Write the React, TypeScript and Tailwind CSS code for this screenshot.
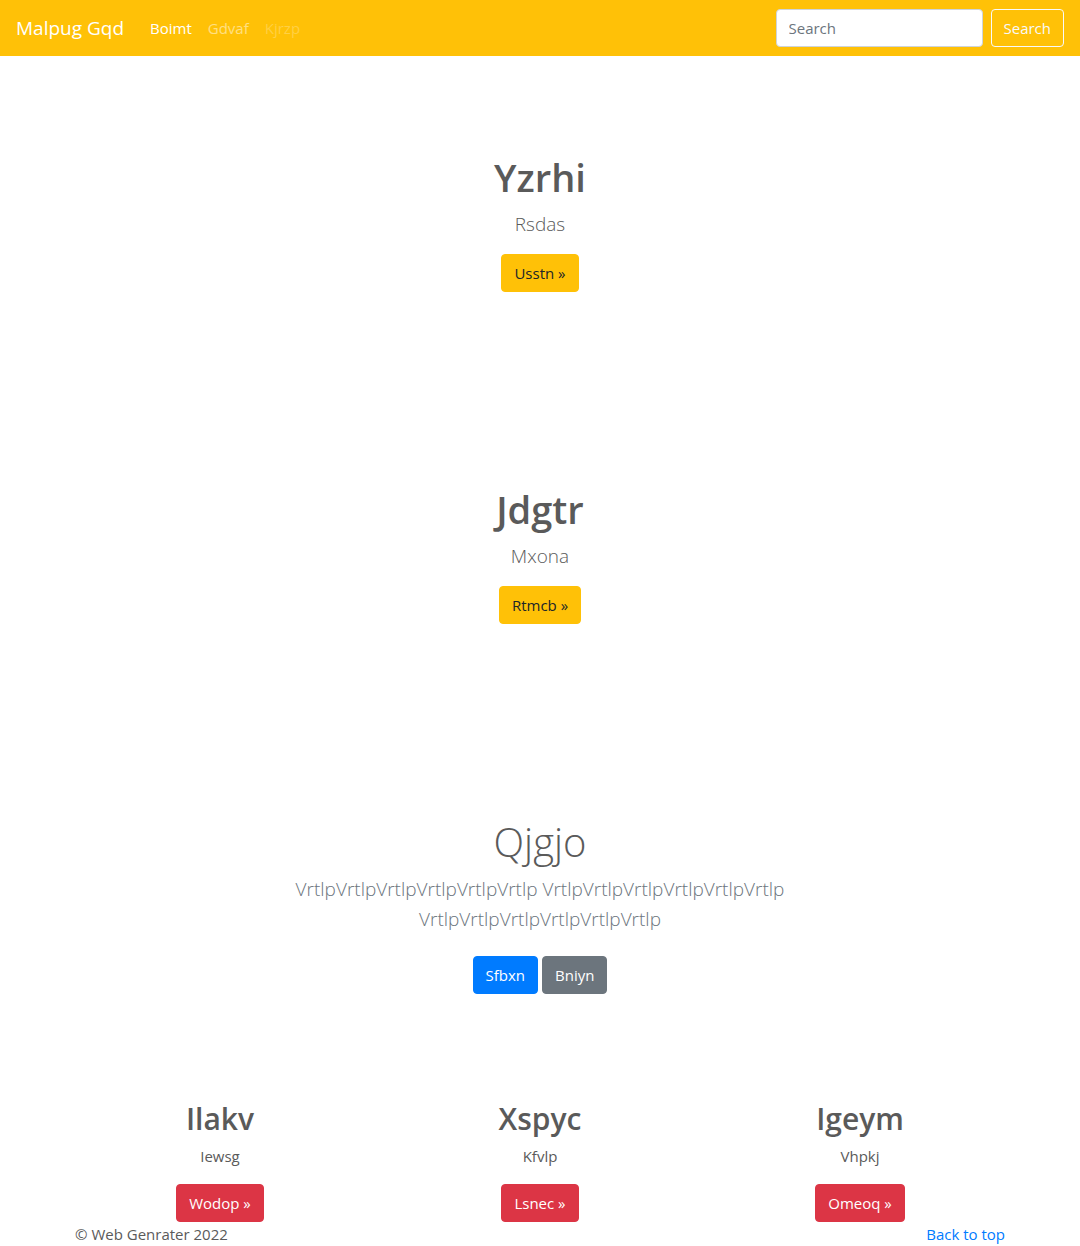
const btn = "rounded border px-3 py-1.5 text-[15px] leading-6";

function Hero({ title, text, action }: { title: string; text: string; action: string }) {
  return (
    <section className="flex flex-col items-center pt-[97px] pb-24 text-center">
      <h1 className="mb-2 text-[38px] leading-12 font-semibold">{title}</h1>
      <p className="mb-[15px] text-[19px] leading-[30px] font-light">{text}</p>
      <a href="#" className={`${btn} border-[#ffc107] bg-[#ffc107] text-[#212529]`}>
        {action} »
      </a>
    </section>
  );
}

function Feature({ title, text, action }: { title: string; text: string; action: string }) {
  return (
    <div className="flex flex-1 flex-col items-center text-center">
      <h2 className="mb-1.5 text-[30px] leading-[38px] font-semibold">{title}</h2>
      <p className="mb-4 text-[15px] leading-6">{text}</p>
      <a href="#" className={`${btn} border-[#dc3545] bg-[#dc3545] text-white`}>
        {action} »
      </a>
    </div>
  );
}

export default function App() {
  return (
    <div id="top" className="bg-white font-['Segoe_UI','Open_Sans','Noto_Sans',sans-serif] text-[15px] text-[#5a5a5a]">
      <nav className="flex h-14 items-center bg-[#ffc107] px-4">
        <a href="#" className="mr-[18px] text-[19px] leading-[30px] text-white">Malpug Gqd</a>
        <div className="flex flex-1">
          <a href="#" className="px-2 py-2 leading-6 text-white">Boimt</a>
          <a href="#" className="px-2 py-2 leading-6 text-white/50">Gdvaf</a>
          <a href="#" aria-disabled="true" className="px-2 py-2 leading-6 text-white/25">Kjrzp</a>
        </div>
        <form className="flex gap-2" onSubmit={(e) => e.preventDefault()}>
          <input type="search" placeholder="Search" aria-label="Search" className="h-[38px] w-[207px] rounded border border-[#ced4da] bg-white px-3 py-1.5 text-[15px] text-[#495057] placeholder:text-[#6c757d]" />
          <button type="submit" className={`${btn} border-[#f8f9fa] text-[#f8f9fa]`}>Search</button>
        </form>
      </nav>
      <main>
        <Hero title="Yzrhi" text="Rsdas" action="Usstn" />
        <Hero title="Jdgtr" text="Mxona" action="Rtmcb" />
        <section className="flex flex-col items-center pt-[98px] pb-[106px] text-center">
          <h1 className="mb-2 text-[40px] leading-12 font-light">Qjgjo</h1>
          <p className="mb-[22px] max-w-[510px] text-[19px] leading-[30px] font-light text-[#6c757d]">
            VrtlpVrtlpVrtlpVrtlpVrtlpVrtlp VrtlpVrtlpVrtlpVrtlpVrtlpVrtlp VrtlpVrtlpVrtlpVrtlpVrtlpVrtlp
          </p>
          <div className="flex gap-1">
            <a href="#" className={`${btn} border-[#007bff] bg-[#007bff] text-white`}>Sfbxn</a>
            <a href="#" className={`${btn} border-[#6c757d] bg-[#6c757d] text-white`}>Bniyn</a>
          </div>
        </section>
        <div className="mx-auto flex max-w-[960px]">
          <Feature title="Ilakv" text="Iewsg" action="Wodop" />
          <Feature title="Xspyc" text="Kfvlp" action="Lsnec" />
          <Feature title="Igeym" text="Vhpkj" action="Omeoq" />
        </div>
      </main>
      <footer className="mx-auto flex max-w-[960px] justify-between px-[15px] leading-6">
        <p>© Web Genrater 2022</p>
        <a href="#top" className="text-[#007bff]">Back to top</a>
      </footer>
    </div>
  );
}
